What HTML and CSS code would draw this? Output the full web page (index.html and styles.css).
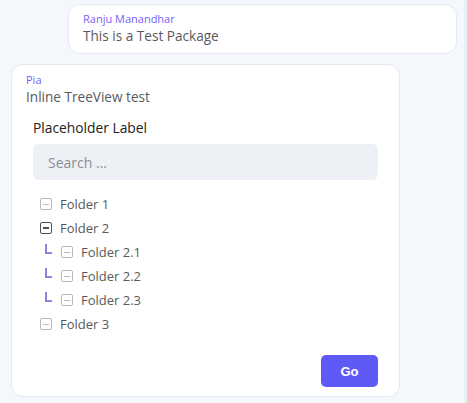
FILE: index.html
```html
<!DOCTYPE html>
<html lang="en">
<head>
  <meta charset="UTF-8">
  <title>Chat TreeView</title>
  <link rel="stylesheet" href="styles.css">
</head>
<body>
  <div class="chat">
    <div class="msg msg-mine">
      <div class="msg-author">Ranju Manandhar</div>
      <div class="msg-text">This is a Test Package</div>
    </div>

    <div class="msg msg-card">
      <div class="msg-author">Pia</div>
      <div class="msg-text">Inline TreeView test</div>

      <div class="tree-block">
        <div class="tree-label">Placeholder Label</div>
        <input class="tree-search" type="text" placeholder="Search ...">

        <ul class="tree">
          <li class="node"><span class="toggle"></span>Folder 1</li>
          <li class="node"><span class="toggle open"></span>Folder 2</li>
          <li class="node child"><span class="branch"></span><span class="toggle"></span>Folder 2.1</li>
          <li class="node child"><span class="branch"></span><span class="toggle"></span>Folder 2.2</li>
          <li class="node child"><span class="branch"></span><span class="toggle"></span>Folder 2.3</li>
          <li class="node"><span class="toggle"></span>Folder 3</li>
        </ul>

        <div class="actions">
          <button class="go-btn" type="button">Go</button>
        </div>
      </div>
    </div>
  </div>
</body>
</html>
```

FILE: styles.css
```css
html, body {
  height: 100%;
}

body {
  margin: 0;
  font-family: "Open Sans", sans-serif;
  background-color: #f4f7fb;
  border-right: 3px solid #eaeff5;
  box-sizing: border-box;
  width: 467px;
}

.chat {
  display: flex;
  flex-direction: column;
  gap: 10px;
  padding: 4px 0 0 11px;
}

.msg {
  background-color: #fff;
  border: 1px solid #e4eaf2;
  border-radius: 12px;
  box-sizing: border-box;
}

.msg-mine {
  margin-left: 57px;
  width: 389px;
  height: 50px;
  padding: 6px 14px;
}

.msg-card {
  width: 389px;
  padding: 7px 14px 9px 14px;
}

.msg-author {
  font-size: 11px;
  color: #7762f7;
  line-height: 15px;
}

.msg-text {
  font-size: 13.6px;
  color: #5a5a5a;
  line-height: 20px;
}

.tree-block {
  padding: 12px 7px 0 7px;
}

.tree-label {
  font-size: 13.8px;
  font-weight: 500;
  color: #222;
  line-height: 18px;
}

.tree-search {
  display: block;
  width: 100%;
  height: 36px;
  margin-top: 7px;
  padding: 0 15px;
  box-sizing: border-box;
  border: none;
  border-radius: 6px;
  background-color: #edf1f5;
  font-family: inherit;
  font-size: 14px;
  color: #444;
}

.tree-search::placeholder {
  color: #8a8f96;
}

.tree {
  list-style: none;
  margin: 12px 0 0 0;
  padding: 0 0 0 7px;
}

.node {
  display: flex;
  align-items: center;
  height: 24px;
  font-size: 13px;
  color: #5a5a5a;
}

.node.child {
  padding-left: 5px;
}

.toggle {
  position: relative;
  width: 12px;
  height: 12px;
  border: 1px solid #b8b8b8;
  border-radius: 2px;
  box-sizing: border-box;
  margin-right: 8px;
}

.toggle::after {
  content: "";
  position: absolute;
  left: 2px;
  right: 2px;
  top: 4.5px;
  height: 1px;
  background-color: #b8b8b8;
}

.toggle.open {
  border-color: #4a4f55;
  border-width: 1.5px;
}

.toggle.open::after {
  background-color: #4a4f55;
  top: 4px;
  height: 1.5px;
}

.branch {
  width: 5px;
  height: 8px;
  border-left: 2px solid #8b86dd;
  border-bottom: 2px solid #8b86dd;
  margin-right: 9px;
  margin-top: -6px;
}

.actions {
  display: flex;
  justify-content: flex-end;
  margin-top: 19px;
}

.go-btn {
  width: 57px;
  height: 32px;
  border: none;
  border-radius: 5px;
  background-color: #5f5af6;
  color: #fff;
  font-family: "Liberation Sans", Arial, sans-serif;
  font-weight: bold;
  font-size: 13px;
}
```
